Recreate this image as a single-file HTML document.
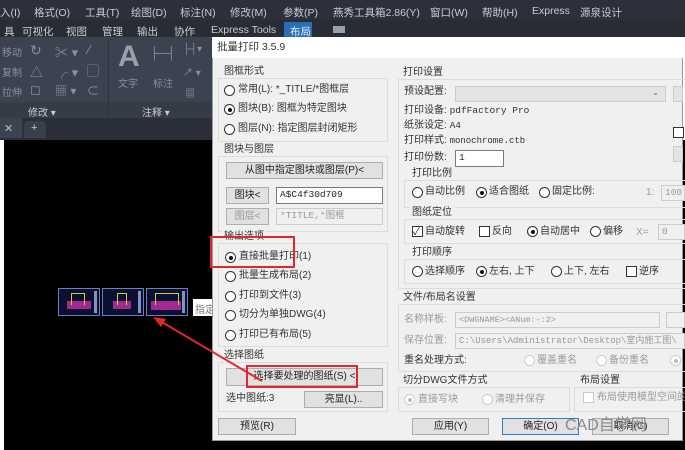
<!DOCTYPE html>
<html><head><meta charset="utf-8"><style>
*{margin:0;padding:0;box-sizing:border-box}
body{width:685px;height:450px;overflow:hidden;background:#fff;position:relative;font-family:"Liberation Sans","Noto Sans CJK SC",sans-serif;font-size:10px;color:#222}
.a{position:absolute;white-space:nowrap}
.m{color:#c9ccd2;font-size:10.5px;top:5px}
.r2{color:#c9ccd2;font-size:10.5px;top:24px}
.rib{color:#8a909a;font-size:10px}
.t{position:absolute;white-space:nowrap;font-size:10px;color:#333;line-height:12px}
.g{color:#9a9a9a}
.rd{position:absolute;width:11px;height:11px;border:1px solid #333;border-radius:50%;background:#fff}
.rd.on::after{content:"";position:absolute;left:2.5px;top:2.5px;width:4px;height:4px;border-radius:50%;background:#111}
.rd.dis{border-color:#ccc}
.rd.dis.on::after{background:#bbb}
.cb{position:absolute;width:11px;height:11px;border:1px solid #333;background:#fff}
.btn{position:absolute;background:#e1e1e1;border:1px solid #adadad;text-align:center;font-size:10px;line-height:15px;color:#222}
.inp{position:absolute;background:#fff;border:1px solid #7a7a7a;font-size:9.5px;line-height:14px;padding-left:3px;font-family:"Liberation Mono","Noto Sans CJK SC",monospace}
.inp.d{background:#f0f0f0;border-color:#ccc;color:#999}
.grp{position:absolute;border:1px solid #dcdcdc}
.red{position:absolute;border:2px solid #e0282c}
.th{position:absolute;top:288px;width:42px;height:28px;border:1px solid #6a7fc0;background:#0b0f30;overflow:hidden}
.th i{position:absolute;display:block}
</style></head><body>
<div class="a" style="left:0;top:0;width:685px;height:20px;background:#2b303a"></div>
<div class="a" style="left:0;top:20px;width:685px;height:17px;background:#272c35"></div>
<span class="a m" style="left:0">入(I)</span>
<span class="a m" style="left:34px">格式(O)</span>
<span class="a m" style="left:85px">工具(T)</span>
<span class="a m" style="left:131px">绘图(D)</span>
<span class="a m" style="left:180px">标注(N)</span>
<span class="a m" style="left:230px">修改(M)</span>
<span class="a m" style="left:283px">参数(P)</span>
<span class="a m" style="left:333px">燕秀工具箱2.86(Y)</span>
<span class="a m" style="left:430px">窗口(W)</span>
<span class="a m" style="left:482px">帮助(H)</span>
<span class="a m" style="left:532px">Express</span>
<span class="a m" style="left:580px">源泉设计</span>
<span class="a r2" style="left:4px">具</span>
<span class="a r2" style="left:22px">可视化</span>
<span class="a r2" style="left:66px">视图</span>
<span class="a r2" style="left:102px">管理</span>
<span class="a r2" style="left:137px">输出</span>
<span class="a r2" style="left:174px">协作</span>
<span class="a r2" style="left:211px">Express Tools</span>
<div class="a" style="left:284px;top:22px;width:28px;height:15px;background:#2a6fb5"></div>
<span class="a r2" style="left:290px;color:#e8eef5">布局</span>
<div class="a" style="left:333px;top:26px;width:12px;height:7px;background:#9aa0a8"></div>
<div class="a" style="left:0;top:37px;width:212px;height:81px;background:#3c4350"></div>
<div class="a" style="left:0;top:102px;width:212px;height:16px;background:#353b47"></div>
<div class="a" style="left:108px;top:40px;width:1px;height:76px;background:#2c313b"></div>
<span class="a rib" style="left:2px;top:44px">移动</span>
<span class="a rib" style="left:2px;top:64px">复制</span>
<span class="a rib" style="left:2px;top:84px">拉伸</span>
<span class="a rib" style="left:30px;top:42px;font-size:14px">↻</span>
<span class="a rib" style="left:55px;top:42px;font-size:13px">✂ ▾</span>
<span class="a rib" style="left:88px;top:42px;font-size:13px">⁄</span>
<span class="a rib" style="left:30px;top:62px;font-size:13px">△</span>
<span class="a rib" style="left:55px;top:62px;font-size:13px">╭ ▾</span>
<span class="a rib" style="left:87px;top:62px;font-size:12px">▢</span>
<span class="a rib" style="left:30px;top:82px;font-size:13px">◻</span>
<span class="a rib" style="left:55px;top:82px;font-size:12px">▦ ▾</span>
<span class="a rib" style="left:87px;top:82px;font-size:12px">⊂</span>
<span class="a" style="left:118px;top:40px;font-size:30px;color:#9aa0aa;font-weight:bold">A</span>
<span class="a rib" style="left:118px;top:75px">文字</span>
<span class="a rib" style="left:150px;top:46px;font-size:12px">├─┤</span>
<span class="a rib" style="left:153px;top:75px">标注</span>
<span class="a rib" style="left:183px;top:44px">├┤▾</span>
<span class="a rib" style="left:183px;top:64px">↗ ▾</span>
<span class="a rib" style="left:185px;top:85px">▦</span>
<span class="a" style="left:28px;top:104px;color:#c9ccd2;font-size:10px">修改 ▾</span>
<span class="a" style="left:142px;top:104px;color:#c9ccd2;font-size:10px">注释 ▾</span>
<div class="a" style="left:0;top:118px;width:212px;height:22px;background:#2a2f38"></div>
<div class="a" style="left:0;top:118px;width:22px;height:20px;background:#3c4350"></div>
<span class="a" style="left:4px;top:122px;color:#bbb;font-size:11px">✕</span>
<div class="a" style="left:24px;top:121px;width:22px;height:17px;background:#3a404b;border-radius:4px 4px 0 0"></div>
<span class="a" style="left:31px;top:122px;color:#ccc;font-size:11px">+</span>
<div class="a" style="left:4px;top:140px;width:681px;height:310px;background:#000"></div>
<div class="th" style="left:58px"><i style="left:8px;top:12px;width:24px;height:8px;background:#a02a90"></i><i style="left:12px;top:4px;width:14px;height:12px;border:1px solid #c8d040;border-bottom:0"></i><i style="right:2px;top:2px;width:3px;height:22px;background:#8890c0"></i></div>
<div class="th" style="left:102px"><i style="left:10px;top:12px;width:18px;height:8px;background:#a02a90"></i><i style="left:14px;top:4px;width:10px;height:12px;border:1px solid #c8d040;border-bottom:0"></i><i style="right:2px;top:2px;width:3px;height:22px;background:#8890c0"></i></div>
<div class="th" style="left:146px"><i style="left:4px;top:12px;width:30px;height:9px;background:#a02a90"></i><i style="left:8px;top:4px;width:24px;height:12px;border:1px solid #c8d040;border-bottom:0"></i><i style="right:2px;top:2px;width:3px;height:22px;background:#8890c0"></i></div>
<div class="a" style="left:193px;top:299px;width:20px;height:17px;background:#fff;color:#777;font-size:10px;padding:2px 0 0 2px">指定</div>
<div class="a" style="left:212px;top:37px;width:471px;height:404px;background:#f0f0f0;border:1px solid #999"></div>
<div class="a" style="left:212px;top:37px;width:471px;height:21px;background:#fff"></div>
<span class="t" style="left:217px;top:41px;font-size:10.5px">批量打印 3.5.9</span>
<div class="grp" style="left:218px;top:78px;width:170px;height:64px"></div>
<span class="t" style="left:222px;top:66px;background:#f0f0f0;padding:0 2px">图框形式</span>
<div class="rd" style="left:224px;top:85px"></div><span class="t" style="left:238px;top:84px">常用(L): *_TITLE/*图框层</span>
<div class="rd on" style="left:224px;top:104px"></div><span class="t" style="left:238px;top:103px">图块(B): 图框为特定图块</span>
<div class="rd" style="left:224px;top:124px"></div><span class="t" style="left:238px;top:123px">图层(N): 指定图层封闭矩形</span>
<div class="grp" style="left:218px;top:156px;width:170px;height:76px"></div>
<span class="t" style="left:222px;top:144px;background:#f0f0f0;padding:0 2px">图块与图层</span>
<div class="btn" style="left:226px;top:162px;width:157px;height:17px">从图中指定图块或图层(P)&lt;</div>
<div class="btn" style="left:226px;top:187px;width:43px;height:17px">图块&lt;</div>
<div class="inp" style="left:276px;top:187px;width:107px;height:17px">A$C4f30d709</div>
<div class="btn" style="left:226px;top:208px;width:43px;height:17px;color:#999">图层&lt;</div>
<div class="inp d" style="left:276px;top:208px;width:107px;height:17px">*TITLE,*图框</div>
<div class="grp" style="left:218px;top:243px;width:170px;height:104px"></div>
<span class="t" style="left:222px;top:231px;background:#f0f0f0;padding:0 2px">输出选项</span>
<div class="rd on" style="left:225px;top:252px"></div><span class="t" style="left:239px;top:251px">直接批量打印(1)</span>
<div class="rd" style="left:225px;top:271px"></div><span class="t" style="left:239px;top:270px">批量生成布局(2)</span>
<div class="rd" style="left:225px;top:291px"></div><span class="t" style="left:239px;top:290px">打印到文件(3)</span>
<div class="rd" style="left:225px;top:310px"></div><span class="t" style="left:239px;top:309px">切分为单独DWG(4)</span>
<div class="rd" style="left:225px;top:330px"></div><span class="t" style="left:239px;top:329px">打印已有布局(5)</span>
<div class="red" style="left:210px;top:236px;width:85px;height:32px"></div>
<div class="grp" style="left:218px;top:362px;width:170px;height:50px"></div>
<span class="t" style="left:222px;top:350px;background:#f0f0f0;padding:0 2px">选择图纸</span>
<div class="btn" style="left:226px;top:368px;width:157px;height:18px">选择要处理的图纸(S) &lt;</div>
<div class="red" style="left:246px;top:365px;width:112px;height:23px"></div>
<span class="t" style="left:226px;top:393px">选中图纸:3</span>
<div class="btn" style="left:304px;top:391px;width:79px;height:17px">亮显(L)..</div>
<div class="btn" style="left:218px;top:418px;width:78px;height:17px">预览(R)</div>
<div class="grp" style="left:398px;top:79px;width:290px;height:210px"></div>
<span class="t" style="left:401px;top:67px;background:#f0f0f0;padding:0 2px">打印设置</span>
<span class="t" style="left:404px;top:86px">预设配置:</span>
<div class="a" style="left:455px;top:86px;width:211px;height:16px;background:#e4e4e4;border:1px solid #ccc"><span style="position:absolute;right:6px;top:1px;font-size:8px;color:#666">⌄</span></div>
<div class="a" style="left:673px;top:86px;width:10px;height:16px;background:#e4e4e4;border:1px solid #ccc"></div>
<span class="t" style="left:404px;top:105px">打印设备: <span style="font-family:'Liberation Mono',monospace;font-size:9.5px">pdfFactory Pro</span></span>
<span class="t" style="left:404px;top:120px">纸张设定: <span style="font-family:'Liberation Mono',monospace;font-size:9.5px">A4</span></span>
<span class="t" style="left:404px;top:135px">打印样式: <span style="font-family:'Liberation Mono',monospace;font-size:9px">monochrome.ctb</span></span>
<div class="cb" style="left:673px;top:127px"></div>
<div class="a" style="left:673px;top:146px;width:10px;height:16px;background:#e4e4e4;border:1px solid #ccc"></div>
<span class="t" style="left:404px;top:152px">打印份数:</span>
<div class="inp" style="left:455px;top:150px;width:49px;height:17px">1</div>
<div class="grp" style="left:404px;top:180px;width:285px;height:28px"></div>
<span class="t" style="left:410px;top:168px;background:#f0f0f0;padding:0 2px">打印比例</span>
<div class="rd" style="left:412px;top:187px"></div><span class="t" style="left:425px;top:186px">自动比例</span>
<div class="rd on" style="left:476px;top:187px"></div><span class="t" style="left:489px;top:186px">适合图纸</span>
<div class="rd" style="left:539px;top:187px"></div><span class="t" style="left:552px;top:186px">固定比例:</span>
<span class="t g" style="left:646px;top:187px">1:</span>
<div class="inp d" style="left:661px;top:185px;width:24px;height:16px">100</div>
<div class="grp" style="left:404px;top:219px;width:285px;height:25px"></div>
<span class="t" style="left:410px;top:207px;background:#f0f0f0;padding:0 2px">图纸定位</span>
<div class="cb" style="left:412px;top:226px"></div><span class="a" style="left:413px;top:223px;font-size:10px">✓</span><span class="t" style="left:425px;top:226px">自动旋转</span>
<div class="cb" style="left:479px;top:226px"></div><span class="t" style="left:492px;top:226px">反向</span>
<div class="rd on" style="left:527px;top:226px"></div><span class="t" style="left:540px;top:226px">自动居中</span>
<div class="rd" style="left:590px;top:226px"></div><span class="t" style="left:603px;top:226px">偏移</span>
<span class="t g" style="left:636px;top:227px">X=</span>
<div class="inp d" style="left:658px;top:224px;width:27px;height:16px">0</div>
<div class="grp" style="left:404px;top:259px;width:285px;height:25px"></div>
<span class="t" style="left:410px;top:247px;background:#f0f0f0;padding:0 2px">打印顺序</span>
<div class="rd" style="left:412px;top:266px"></div><span class="t" style="left:425px;top:266px">选择顺序</span>
<div class="rd on" style="left:476px;top:266px"></div><span class="t" style="left:489px;top:266px">左右, 上下</span>
<div class="rd" style="left:551px;top:266px"></div><span class="t" style="left:564px;top:266px">上下, 左右</span>
<div class="cb" style="left:626px;top:266px"></div><span class="t" style="left:639px;top:266px">逆序</span>
<div class="grp" style="left:398px;top:304px;width:290px;height:68px"></div>
<span class="t" style="left:401px;top:292px;background:#f0f0f0;padding:0 2px">文件/布局名设置</span>
<span class="t g" style="left:404px;top:314px">名称样板:</span>
<div class="inp d" style="left:455px;top:312px;width:205px;height:16px;font-size:8.5px">&lt;DWGNAME&gt;&lt;ANum:-:2&gt;</div>
<div class="a" style="left:666px;top:312px;width:19px;height:16px;background:#f0f0f0;border:1px solid #ccc"></div>
<span class="t g" style="left:404px;top:335px">保存位置:</span>
<div class="inp d" style="left:455px;top:333px;width:230px;height:16px;font-size:9px">C:\Users\Administrator\Desktop\室内施工图\</div>
<span class="t" style="left:404px;top:355px">重名处理方式:</span>
<div class="rd dis" style="left:524px;top:355px"></div><span class="t g" style="left:537px;top:355px">覆盖重名</span>
<div class="rd dis" style="left:596px;top:355px"></div><span class="t g" style="left:609px;top:355px">备份重名</span>
<div class="rd dis on" style="left:670px;top:355px"></div>
<div class="grp" style="left:398px;top:387px;width:172px;height:25px"></div>
<span class="t" style="left:401px;top:375px;background:#f0f0f0;padding:0 2px">切分DWG文件方式</span>
<div class="rd dis on" style="left:404px;top:394px"></div><span class="t g" style="left:418px;top:394px">直接写块</span>
<div class="rd dis" style="left:482px;top:394px"></div><span class="t g" style="left:495px;top:394px">清理并保存</span>
<div class="grp" style="left:574px;top:387px;width:115px;height:25px"></div>
<span class="t" style="left:578px;top:375px;background:#f0f0f0;padding:0 2px">布局设置</span>
<div class="cb" style="left:583px;top:392px;border-color:#ccc"></div><span class="t g" style="left:597px;top:392px">布局使用模型空间的</span>
<div class="btn" style="left:412px;top:418px;width:77px;height:17px">应用(Y)</div>
<div class="btn" style="left:502px;top:418px;width:77px;height:17px;border-color:#2c7fd0">确定(O)</div>
<div class="btn" style="left:592px;top:418px;width:77px;height:17px">取消(C)</div>
<span class="a" style="left:565px;top:411px;font-size:16px;color:#8a8a8a">CAD自学网</span>
<svg class="a" style="left:0;top:0" width="685" height="450"><line x1="262" y1="381" x2="160" y2="321" stroke="#e0282c" stroke-width="2"/><polygon points="153,317 166,319 161,327" fill="#e0282c"/></svg>
</body></html>
